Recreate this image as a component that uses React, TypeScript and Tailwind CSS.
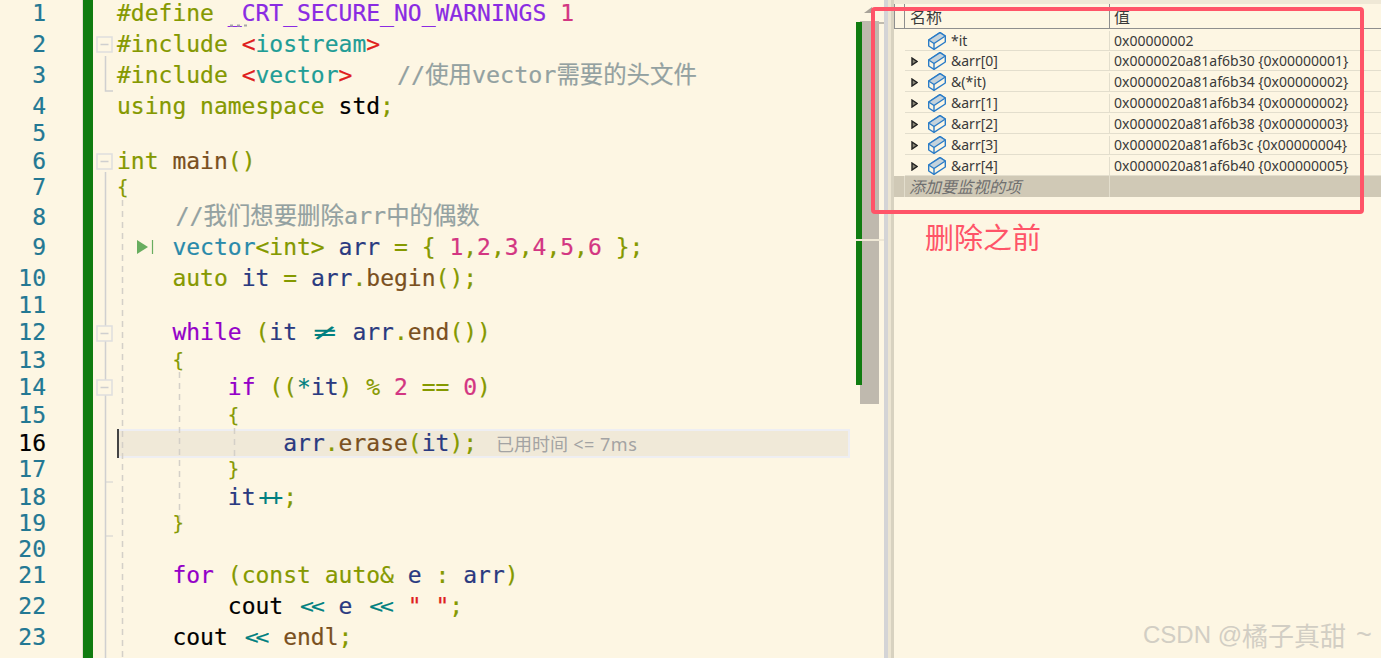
type Seg = [string, string];

const OLIVE = 'text-[#859900]';
const GRAY = 'text-[#93a1a1]';
const NAVY = 'text-[#2a3a80]';
const BROWN = 'text-[#7a5020]';
const TEAL = 'text-[#008080]';
const PINK = 'text-[#d33682]';
const PURPLE = 'text-[#9400c8]';
const CYAN = 'text-[#2a8aaa]';
const RED = 'text-[#e01f1f]';
const BLACK = 'text-black';
// two-cell ligatures and the smaller comment / brace runs
const NEQ = 'text-[#008080] inline-block w-[27.7px] text-center scale-x-[1.7] [-webkit-text-stroke:0px]';
const SHIFT = 'text-[#008080] inline-block w-[27.7px] text-center tracking-[-3px] scale-y-[0.85]';
const INC = 'text-[#008080] inline-block w-[27.7px] text-center tracking-[-3px]';
const NOTE = `${GRAY} text-[23.4px] ml-[3px]`;
const BRACE = 'text-[#859900] text-[19px] w-[13.85px] inline-block';

const lines: { h: number; pt?: number; pb?: number; indent: number; segs: Seg[] }[] = [
  { h: 29, pb: 2, indent: 0, segs: [[OLIVE, '#define '], ['text-[#8a2be2]', '_CRT_SECURE_NO_WARNINGS'], [PINK, ' 1']] },
  { h: 31, indent: 0, segs: [[OLIVE, '#include '], [RED, '<'], ['text-[#1f9d96]', 'iostream'], [RED, '>']] },
  { h: 31, indent: 0, segs: [[OLIVE, '#include '], [RED, '<'], ['text-[#1f9d96]', 'vector'], [RED, '>'], [OLIVE, '   '], [NOTE, '//使用vector需要的头文件']] },
  { h: 29, pt: 2, indent: 0, segs: [[OLIVE, 'using namespace '], [BLACK, 'std'], [OLIVE, ';']] },
  { h: 27, indent: 0, segs: [] },
  { h: 28, indent: 0, segs: [[OLIVE, 'int '], [BROWN, 'main'], [OLIVE, '()']] },
  { h: 27, pb: 2, indent: 0, segs: [[BRACE, '{']] },
  { h: 30, indent: 4, segs: [[NOTE, '//我们想要删除arr中的偶数']] },
  { h: 31, indent: 4, segs: [[CYAN, 'vector'], [OLIVE, '<int> '], [NAVY, 'arr'], [OLIVE, ' = { '], [PINK, '1'], [OLIVE, ','], [PINK, '2'], [OLIVE, ','], [PINK, '3'], [OLIVE, ','], [PINK, '4'], [OLIVE, ','], [PINK, '5'], [OLIVE, ','], [PINK, '6'], [OLIVE, ' };']] },
  { h: 29, pt: 2, indent: 4, segs: [[OLIVE, 'auto '], [NAVY, 'it'], [OLIVE, ' = '], [NAVY, 'arr'], [OLIVE, '.'], [BROWN, 'begin'], [OLIVE, '();']] },
  { h: 27, indent: 0, segs: [] },
  { h: 27, indent: 4, segs: [[PURPLE, 'while'], [OLIVE, ' ('], [NAVY, 'it '], [NEQ, '≠'], [NAVY, ' arr'], [OLIVE, '.'], [BROWN, 'end'], [OLIVE, '())']] },
  { h: 28, indent: 4, segs: [[BRACE, '{']] },
  { h: 27, indent: 8, segs: [[PURPLE, 'if'], [OLIVE, ' (('], [TEAL, '*'], [NAVY, 'it'], [OLIVE, ') % '], [PINK, '2'], [OLIVE, ' == '], [PINK, '0'], [OLIVE, ')']] },
  { h: 28, indent: 8, segs: [[BRACE, '{']] },
  { h: 29, indent: 12, segs: [[NAVY, 'arr'], [OLIVE, '.'], [BROWN, 'erase'], [OLIVE, '('], [NAVY, 'it'], [OLIVE, ');']] },
  { h: 22, indent: 8, segs: [[BRACE, '}']] },
  { h: 30, pt: 4, indent: 8, segs: [[NAVY, 'it'], [INC, '++'], [OLIVE, ';']] },
  { h: 26, indent: 4, segs: [[BRACE, '}']] },
  { h: 26, indent: 0, segs: [] },
  { h: 29, pb: 2, indent: 4, segs: [[PURPLE, 'for'], [OLIVE, ' (const auto& '], [NAVY, 'e'], [OLIVE, ' : '], [NAVY, 'arr'], [OLIVE, ')']] },
  { h: 31, indent: 8, segs: [[BLACK, 'cout '], [SHIFT, '<<'], [NAVY, ' e '], [SHIFT, '<<'], [RED, ' " "'], [OLIVE, ';']] },
  { h: 31, indent: 4, segs: [[BLACK, 'cout '], [SHIFT, '<<'], [BROWN, ' endl'], [OLIVE, ';']] },
];

const watch = [
  { name: '*it', value: '0x00000002', arrow: false, h: 22, pt: 2 },
  { name: '&arr[0]', value: '0x0000020a81af6b30 {0x00000001}', arrow: true, h: 20, pt: 1 },
  { name: '&(*it)', value: '0x0000020a81af6b34 {0x00000002}', arrow: true, h: 21, pt: 2 },
  { name: '&arr[1]', value: '0x0000020a81af6b34 {0x00000002}', arrow: true, h: 21, pt: 2 },
  { name: '&arr[2]', value: '0x0000020a81af6b38 {0x00000003}', arrow: true, h: 21, pt: 2 },
  { name: '&arr[3]', value: '0x0000020a81af6b3c {0x00000004}', arrow: true, h: 21, pt: 2 },
  { name: '&arr[4]', value: '0x0000020a81af6b40 {0x00000005}', arrow: true, h: 21, pt: 2 },
];

function BoxIcon() {
  return (
    <svg width="18" height="18" viewBox="0 0 18 18" fill="none" stroke="#2a7cc7" strokeWidth="1.4" strokeLinejoin="round" className="shrink-0">
      <path d="M.7 8 12 .7 17.3 4v6L6 17.3.7 14z" fill="#fdf6e3" />
      <path d="M.7 8 12 .7 17.3 4 6 11.5z" fill="#c5d3dc" />
      <path d="M6 11.5v5.8" />
    </svg>
  );
}

function Outline() {
  const line = '#d0d0d0';
  const box = (y: number) => (
    <g key={y}>
      <rect x="1" y={y} width="15" height="15" fill="#fdf6e3" stroke="#dedede" strokeWidth="1.5" />
      <line x1="4.5" x2="12.5" y1={y + 7.5} y2={y + 7.5} stroke="#cfcfcf" strokeWidth="1.5" />
    </g>
  );
  return (
    <svg width="24" height="658" className="shrink-0">
      <path d="M9.5 56V91H17" stroke={line} strokeWidth="1.5" fill="none" />
      <path d="M9.5 172V658" stroke={line} strokeWidth="1.5" fill="none" />
      <path d="M9.5 482H17M9.5 536H17" stroke={line} strokeWidth="1" fill="none" />
      {box(37)}
      {box(154)}
      {box(326)}
      {box(380)}
    </svg>
  );
}

export default function App() {
  return (
    <div className="relative flex h-[658px] w-[1381px] overflow-hidden bg-[#fdf6e3] [font-family:'Noto_Sans','Noto_Sans_CJK_SC',sans-serif]">
      {/* line numbers */}
      <div className="flex w-[83px] shrink-0 flex-col border-r border-r-[#e4dfcf] [font-family:'DejaVu_Sans_Mono','Noto_Sans_CJK_SC',monospace] text-[23px] [-webkit-text-stroke:0.2px]">
        {lines.map((l, i) => (
          <div
            key={i}
            style={{ height: l.h, paddingTop: l.pt, paddingBottom: l.pb }}
            className={`flex shrink-0 items-center justify-end pr-[36px] leading-none ${i === 15 ? 'text-black' : 'text-[#237893]'}`}
          >
            {i + 1}
          </div>
        ))}
      </div>
      <div className="w-[10px] shrink-0 bg-[#107c10]" />
      <div className="ml-[3px] shrink-0">
        <Outline />
      </div>

      {/* code */}
      <div className="relative ml-[-3px] w-[733px] shrink-0 [font-family:'DejaVu_Sans_Mono','Noto_Sans_CJK_SC',monospace] text-[23px] [-webkit-text-stroke:0.2px]">
        {lines.map((l, i) => (
          <div
            key={i}
            style={{ height: l.h, paddingTop: l.pt, paddingBottom: l.pb, paddingLeft: l.indent * 13.85 - (i === 15 ? 2 : 0) }}
            className={`relative flex shrink-0 items-center whitespace-pre leading-none ${
              i === 15 ? 'border-2 border-[#eeeef2] bg-[#f0e9d8]' : ''
            }`}
          >
            {i === 0 && (
              <svg width="20" height="4" className="absolute left-[112px] top-[24px]">
                <path d="M1 1.5h3M8 1.5h3M15 1.5h3" stroke="#a8a8a8" strokeWidth="2" />
              </svg>
            )}
            {i === 8 && (
              <svg width="20" height="20" viewBox="0 0 20 20" className="absolute left-[19px] top-[6px]">
                <path d="M1 2 12 9 1 16z" fill="#68ad5f" />
                <path d="M16.5 2v14" stroke="#68ad5f" strokeWidth="1.2" />
              </svg>
            )}
            {l.segs.map((s, j) => (
              <span key={j} className={s[0]}>
                {s[1]}
              </span>
            ))}
            {i === 15 && (
              <span className="ml-[19px] [font-family:'Noto_Sans','Noto_Sans_CJK_SC',sans-serif] text-[18px] text-[#a3a3a3] [-webkit-text-stroke:0px]">
                已用时间<span className="tracking-[0.5px]"> &lt;= 7ms</span>
              </span>
            )}
            {i === 15 && <span className="absolute left-[-2px] top-[-2px] h-[29px] w-[2px] bg-[#444]" />}
          </div>
        ))}
        <svg width="733" height="658" className="pointer-events-none absolute left-0 top-0">
          <path d="M5.5 200V658" stroke="#d4d0c8" strokeWidth="1.5" strokeDasharray="6 5" />
          <path d="M62.5 372V525" stroke="#d4d0c8" strokeWidth="1.5" strokeDasharray="6 5" />
          <path d="M117.5 428V456" stroke="#d4d0c8" strokeWidth="1.5" strokeDasharray="6 5" />
        </svg>
      </div>

      {/* scrollbar */}
      <div className="relative ml-[6px] flex w-[28px] shrink-0 pt-[21px]">
        <svg width="10" height="6" viewBox="0 0 10 6" className="absolute left-[8px] top-[7px]">
          <path d="M0 6 8 0v6z" fill="#a8a399" />
        </svg>
        <div className="ml-[4px] h-[383px] w-[19px] bg-[#bfb9ae]" />
        <div className="absolute left-0 top-[22px] h-[363px] w-[6px] bg-[#107c10]" />
        <div className="absolute left-0 top-[239px] h-[2px] w-[28px] bg-[#efe8d6]" />
        <div className="absolute left-[22px] top-[22px] h-[2px] w-[6px] bg-[#c0bbaf]" />
      </div>

      {/* splitter */}
      <div className="flex w-[10px] shrink-0">
        <div className="w-[4px] bg-[#d4d4d6]" />
        <div className="w-[3px] bg-[#ece5d2]" />
        <div className="w-[3px] bg-[#d8d2c0]" />
      </div>

      {/* watch panel */}
      <div className="flex min-w-0 flex-1 flex-col text-[14px] leading-none text-[#3a3a3a]">
        <div className="h-[4px] bg-[#efe8d6]" />
        <div className="flex h-[25px] border-b border-[#8e8e8e] text-[16px]">
          <div className="w-[11px] border-x border-[#8e8e8e]" />
          <div className="flex w-[205px] items-center border-r border-[#8e8e8e] pl-[5px] pt-[2px]">名称</div>
          <div className="flex items-center pl-[4px] pt-[2px]">值</div>
        </div>
        {watch.map((w) => (
          <div key={w.name} style={{ height: w.h, paddingTop: w.pt }} className="ml-[11px] flex border-b border-[#e3decd]">
            <div className="flex w-[205px] items-center border-r border-[#e3decd]">
              <div className="flex w-[23px] shrink-0 justify-end pr-[10px]">
                {w.arrow && (
                  <svg width="7" height="9" viewBox="0 0 7 9">
                    <path d="M1 1 6 4.5 1 8z" fill="#8a8778" stroke="#222" strokeWidth="1.4" />
                  </svg>
                )}
              </div>
              <BoxIcon />
              <span className="ml-[5px]">{w.name}</span>
            </div>
            <div className="flex items-center whitespace-nowrap pl-[4px]">{w.value}</div>
          </div>
        ))}
        <div className="flex h-[21px] bg-[#d0c9b6]">
          <div className="w-[11px] border-r border-[#e3decd]" />
          <div className="flex w-[205px] items-center border-r border-[#e3decd] pl-[4px] text-[16px] italic text-[#6f6f6f]">添加要监视的项</div>
        </div>
      </div>

      {/* annotation */}
      <div className="pointer-events-none absolute left-[871px] top-[7px] h-[207px] w-[493px] rounded-[4px] border-4 border-[#ff5468]" />
      <div className="absolute left-[925px] top-[216px] text-[29px] leading-[40px] text-[#ff5468] [font-family:'Noto_Sans_CJK_SC',sans-serif]">
        删除之前
      </div>
      <div className="absolute left-[1143px] top-[618px] flex items-center whitespace-pre text-[24px] leading-[34px] text-[#d2cec4] [font-family:'Liberation_Sans','Noto_Sans_CJK_SC',sans-serif]">
        CSDN @<span className="text-[26px] [font-family:'Noto_Sans_CJK_SC',sans-serif]">橘子真甜</span>
        <span className="ml-[10px] text-[27px]">~</span>
      </div>
    </div>
  );
}
